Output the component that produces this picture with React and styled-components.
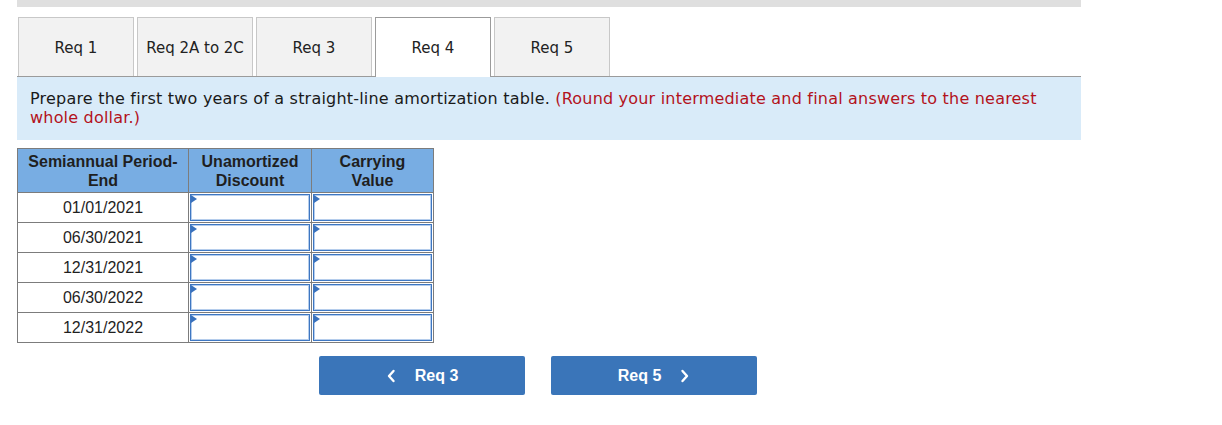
import React from "react";
import styled, { createGlobalStyle } from "styled-components";

const tabs = ["Req 1", "Req 2A to 2C", "Req 3", "Req 4", "Req 5"];
const periods = ["01/01/2021", "06/30/2021", "12/31/2021", "06/30/2022", "12/31/2022"];

export default function App() {
  return (
    <>
      <GlobalStyle />
      <Page>
        <TopBar />
        <TabRow>
          {tabs.map((t) => (
            <Tab key={t} $active={t === "Req 4"}>
              {t}
            </Tab>
          ))}
        </TabRow>
        <Instructions>
          Prepare the first two years of a straight-line amortization table.{" "}
          <Hint>(Round your intermediate and final answers to the nearest whole dollar.)</Hint>
        </Instructions>

        <Table>
          <colgroup>
            <col style={{ width: 171 }} />
            <col style={{ width: 123 }} />
            <col style={{ width: 122 }} />
          </colgroup>
          <thead>
            <tr>
              <HeadCell>
                Semiannual Period-
                <br />
                End
              </HeadCell>
              <HeadCell>
                Unamortized
                <br />
                Discount
              </HeadCell>
              <HeadCell>
                Carrying
                <br />
                Value
              </HeadCell>
            </tr>
          </thead>
          <tbody>
            {periods.map((p) => (
              <tr key={p}>
                <DateCell>{p}</DateCell>
                <InputCell>
                  <InputWrap>
                    <AnswerInput type="text" />
                    <Flag />
                  </InputWrap>
                </InputCell>
                <InputCell>
                  <InputWrap>
                    <AnswerInput type="text" />
                    <Flag />
                  </InputWrap>
                </InputCell>
              </tr>
            ))}
          </tbody>
        </Table>

        <NavRow>
          <NavButton>
            <Chevron viewBox="0 0 10 14">
              <path d="M7.5 2 L3 7 L7.5 12" />
            </Chevron>
            Req 3
          </NavButton>
          <NavButton>
            Req 5
            <Chevron viewBox="0 0 10 14">
              <path d="M2.5 2 L7 7 L2.5 12" />
            </Chevron>
          </NavButton>
        </NavRow>
      </Page>
    </>
  );
}

const GlobalStyle = createGlobalStyle`
  body {
    margin: 0;
    background: #ffffff;
  }
`;

const Page = styled.div`
  width: 1064px;
  margin-left: 17px;
`;

const TopBar = styled.div`
  height: 7px;
  background: #dfdfdf;
`;

const TabRow = styled.div`
  display: flex;
  align-items: flex-start;
  gap: 3px;
  margin-top: 10px;
  padding-left: 1px;
  position: relative;
  z-index: 1;
`;

const Tab = styled.div`
  box-sizing: border-box;
  width: 116px;
  height: ${(p) => (p.$active ? "60px" : "59px")};
  margin-bottom: ${(p) => (p.$active ? "-1px" : "0")};
  padding-top: 21px;
  text-align: center;
  border: 1px solid ${(p) => (p.$active ? "#9b9b9b" : "#c8c8c8")};
  border-bottom: none;
  background: ${(p) => (p.$active ? "#ffffff" : "#f2f2f2")};
  font-family: "DejaVu Sans", Verdana, sans-serif;
  font-size: 15px;
  line-height: 18px;
  color: #222;
`;

const Instructions = styled.div`
  box-sizing: border-box;
  height: 64px;
  border-top: 1px solid #9b9b9b;
  background: #d9ebf9;
  padding: 12px 40px 0 13px;
  font-family: "DejaVu Sans", Verdana, sans-serif;
  font-size: 16px;
  letter-spacing: 0.2px;
  line-height: 19px;
  color: #1a1a1a;
`;

const Hint = styled.span`
  color: #b3121c;
`;

const Table = styled.table`
  margin-top: 8px;
  border-collapse: collapse;
  table-layout: fixed;
  width: 417px;
  font-family: "Liberation Sans", Arial, sans-serif;
  font-size: 16px;
  border: 1px solid #7c7c7c;
`;

const HeadCell = styled.th`
  background: #78ade3;
  border: 1px solid #7c7c7c;
  height: 43px;
  padding: 0;
  font-weight: bold;
  line-height: 19px;
  color: #1f1f1f;
  text-align: center;
`;

const DateCell = styled.td`
  border: 1px solid #7c7c7c;
  height: 28px;
  padding: 0;
  text-align: center;
  color: #1f1f1f;
`;

const InputCell = styled.td`
  border: 1px solid #7c7c7c;
  height: 28px;
  padding: 1px 1px 0 1px;
  vertical-align: top;
`;

const InputWrap = styled.div`
  position: relative;
  height: 27px;
`;

const AnswerInput = styled.input`
  box-sizing: border-box;
  display: block;
  width: 100%;
  height: 27px;
  margin: 0;
  border: 1px solid #3e77c2;
  box-shadow: inset 0 0 0 1px #b5cdec;
  outline: none;
  background: #ffffff;
  font-family: "Liberation Sans", Arial, sans-serif;
  font-size: 16px;
`;

const Flag = styled.span`
  position: absolute;
  left: 1px;
  top: 1px;
  width: 0;
  height: 0;
  border-top: 4px solid transparent;
  border-bottom: 4px solid transparent;
  border-left: 6px solid #3a72bd;
`;

const NavRow = styled.div`
  display: flex;
  gap: 26px;
  margin-top: 13px;
  padding-left: 302px;
`;

const NavButton = styled.button`
  width: 206px;
  height: 39px;
  display: flex;
  align-items: center;
  justify-content: center;
  gap: 19px;
  border: none;
  border-radius: 2px;
  background: #3a75b9;
  color: #ffffff;
  font-family: "Liberation Sans", Arial, sans-serif;
  font-size: 16px;
  font-weight: bold;
  cursor: pointer;
`;

const Chevron = styled.svg`
  width: 10px;
  height: 14px;
  fill: none;
  stroke: #ffffff;
  stroke-width: 2.4;
  stroke-linecap: round;
  stroke-linejoin: round;
`;
